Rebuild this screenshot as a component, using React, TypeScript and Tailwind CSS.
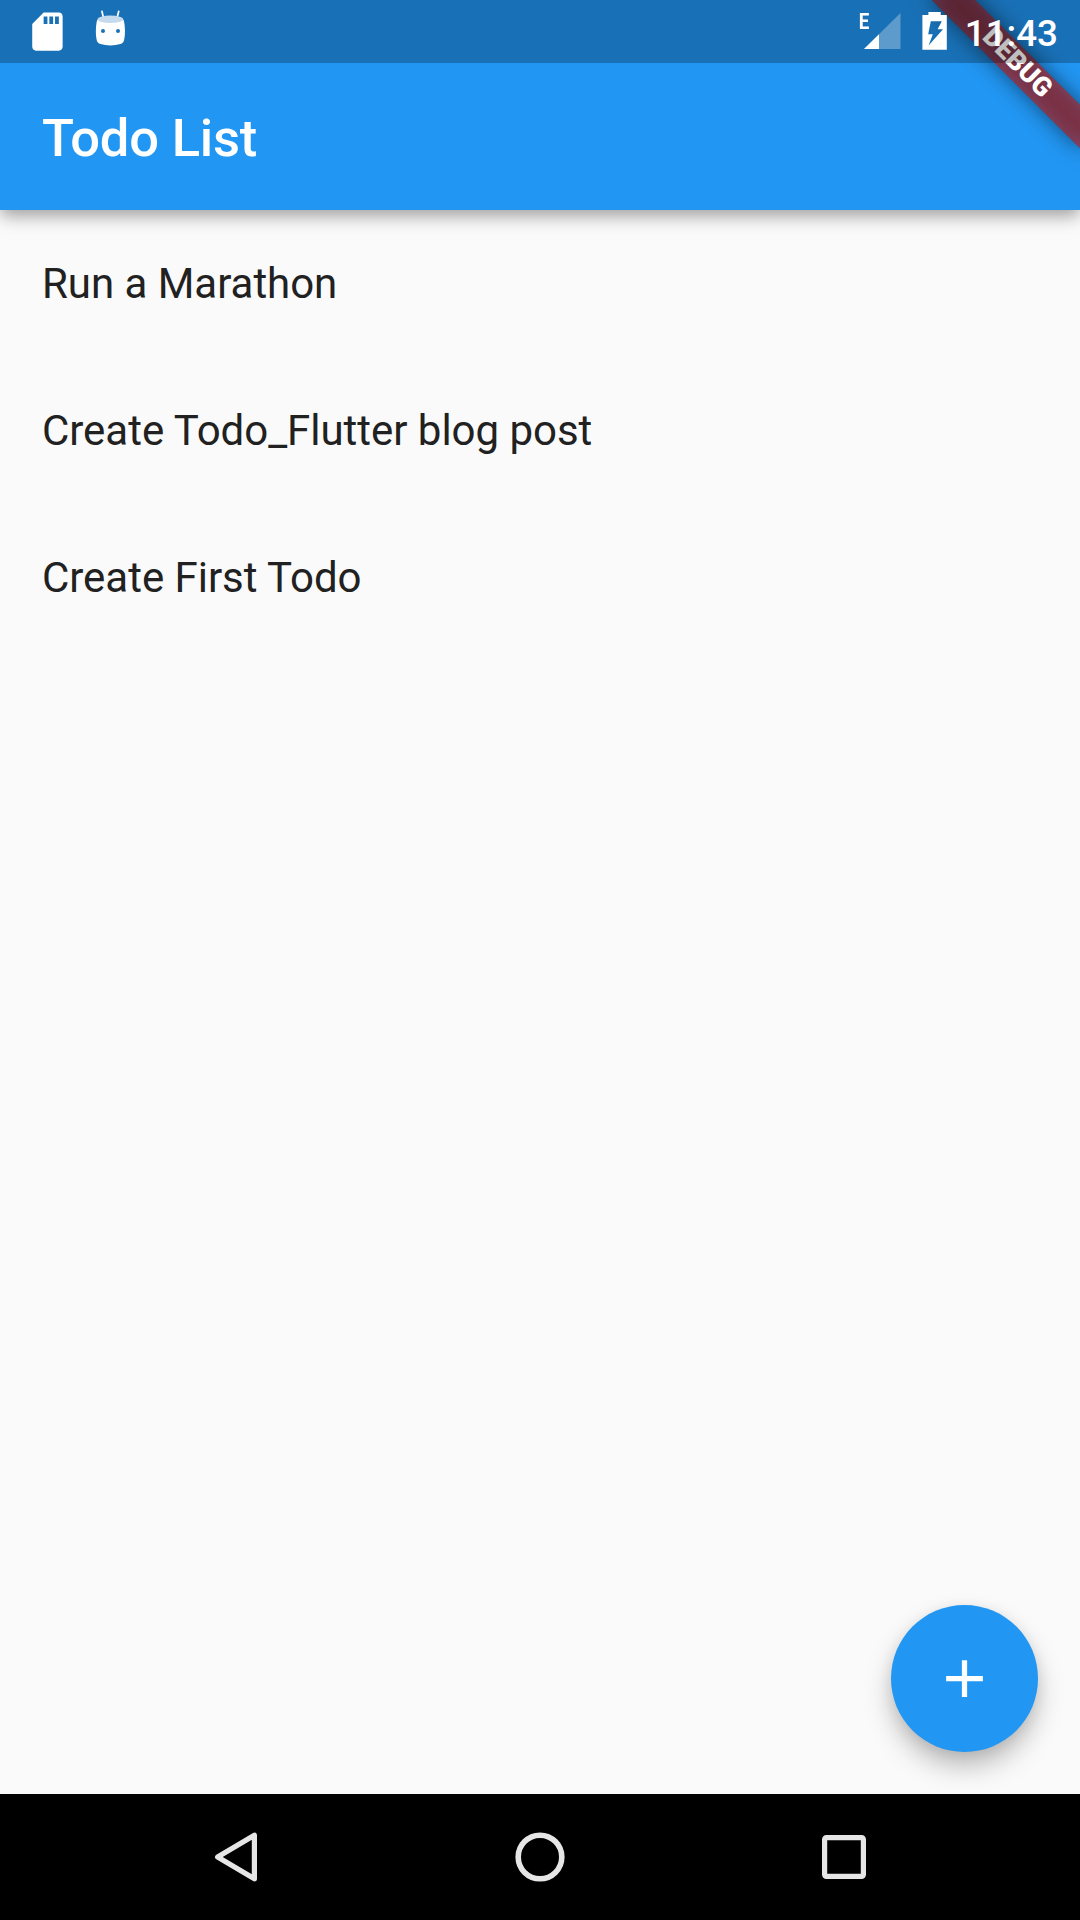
const todos = ["Run a Marathon", "Create Todo_Flutter blog post", "Create First Todo"];

function SdCardIcon() {
  return (
    <svg className="h-[46px] w-[46px]" viewBox="0.2 0.1 24.2 24.2" fill="#fff">
      <path d="M18 2h-8L4 8v12c0 1.1.9 2 2 2h12c1.1 0 2-.9 2-2V4c0-1.1-.9-2-2-2zm-6 6h-2V4h2v4zm3 0h-2V4h2v4zm3 0h-2V4h2v4z" />
    </svg>
  );
}

function DroidIcon() {
  return (
    <svg className="ml-[24px] h-[38px] w-[32px]" viewBox="0.2 -0.4 32 38">
      <path d="M7.2 2l1.3 6M23.9 2l-1.5 6" stroke="#fff" strokeWidth="1.8" strokeLinecap="round" />
      <path d="M2.3 10.5C1 16 .5 24 1.9 30.500c.5 2.200 1.600 3.400 3.800 4.100 6.200 1.900 13.700 1.900 19.800 0 2.200-.7 3.300-1.900 3.800-4.100 1.400-6.500.9-14.500-.4-20z" fill="#fff" />
      <ellipse cx="15.600" cy="9.900" rx="13" ry="3.700" fill="#c5daec" />
      <circle cx="8.200" cy="21.500" r="2" fill="#1971b6" />
      <circle cx="23.200" cy="21.500" r="2" fill="#1971b6" />
    </svg>
  );
}

function SignalIcon() {
  return (
    <svg className="h-[36px] w-[37px]" viewBox="0 0 37 36">
      <path d="M0 36L36.500 0v36z" fill="#fff" fillOpacity=".3" />
      <path d="M0 36L15 21.200V36z" fill="#fff" />
    </svg>
  );
}

function BatteryIcon() {
  return (
    <svg className="ml-[21px] h-[38px] w-[25px]" viewBox="0 0 25 38">
      <path
        fillRule="evenodd"
        fill="#fff"
        d="M6.400 0h12.300v3H24.800v34.800H.4V3h6zM8.800 9.200L6.200 22.200h4.600L6.600 33.400 21 17.300h-5.400l4.200-8.100z"
      />
    </svg>
  );
}

function DebugBanner() {
  return (
    <div className="absolute top-0 right-[-105px] h-[105px] w-[210px] origin-top rotate-45">
      <div className="absolute bottom-0 h-[31.5px] w-full bg-black/50 blur-[10.4px]" />
      <div className="absolute bottom-0 flex h-[31.5px] w-full items-center justify-center bg-[#b71c1ca0] pb-[2px] text-[26.775px] leading-none font-black text-white">
        DEBUG
      </div>
    </div>
  );
}

function StatusBar() {
  return (
    <div className="relative z-20 flex h-[63px] justify-between bg-black/25">
      <div className="flex pt-[9px] pl-[25px]">
        <SdCardIcon />
        <DroidIcon />
      </div>
      <div className="flex pt-[12px] pr-[22px]">
        <span className="-mr-[6px] -mt-[1px] origin-right scale-x-85 text-[22px] leading-[22px] font-bold text-white">E</span>
        <div className="pt-[1px]">
          <SignalIcon />
        </div>
        <BatteryIcon />
        <span className="mt-[1px] ml-[18px] text-[36.75px] leading-[42px] font-medium text-white">11:43</span>
      </div>
    </div>
  );
}

export default function App() {
  return (
    <div className="relative flex h-[1920px] w-[1080px] flex-col overflow-hidden bg-[#fafafa] font-['Roboto',sans-serif]">
      <header className="relative z-10 h-[210px] bg-[#2196f3] shadow-[0_8px_16px_-1px_rgba(0,0,0,0.3),0_2px_12px_0_rgba(0,0,0,0.08)]">
        <DebugBanner />
        <StatusBar />
        <div className="flex h-[147px] items-center pt-[3px] pl-[42px]">
          <h1 className="text-[52.5px] leading-none font-medium tracking-[-0.2px] text-white">Todo List</h1>
        </div>
      </header>
      <main className="flex-1">
        <ul>
          {todos.map((todo) => (
            <li key={todo} className="flex h-[147px] items-center px-[42px] text-[42px] leading-none tracking-[-0.03px] text-[#212121]">
              {todo}
            </li>
          ))}
        </ul>
      </main>
      <button className="absolute right-[42px] bottom-[168px] flex h-[147px] w-[147px] items-center justify-center rounded-full bg-[#2196f3] shadow-[0_15px_28px_-2px_rgba(0,0,0,0.28),0_2px_14px_0_rgba(0,0,0,0.07)]">
        <svg className="h-[63px] w-[63px]" viewBox="0 0 24 24" fill="#fff">
          <path d="M19 13h-6v6h-2v-6H5v-2h6V5h2v6h6v2z" />
        </svg>
      </button>
      <nav className="flex h-[126px] items-center justify-center gap-[254px] bg-black">
        <svg className="h-[50px] w-[50px]" viewBox="0 0 50 50" fill="none" stroke="#e6e6e6" strokeWidth="5.200" strokeLinejoin="round">
          <path d="M6.600 25L43.400 3.200v43.600z" />
        </svg>
        <svg className="h-[50px] w-[50px]" viewBox="0 0 50 50" fill="none" stroke="#e6e6e6" strokeWidth="5.600">
          <circle cx="25" cy="25" r="21.800" />
        </svg>
        <svg className="h-[50px] w-[50px]" viewBox="0 0 50 50" fill="none" stroke="#e6e6e6" strokeWidth="5.200">
          <rect x="5.600" y="5.600" width="38.800" height="38.800" rx="1.800" />
        </svg>
      </nav>
    </div>
  );
}
